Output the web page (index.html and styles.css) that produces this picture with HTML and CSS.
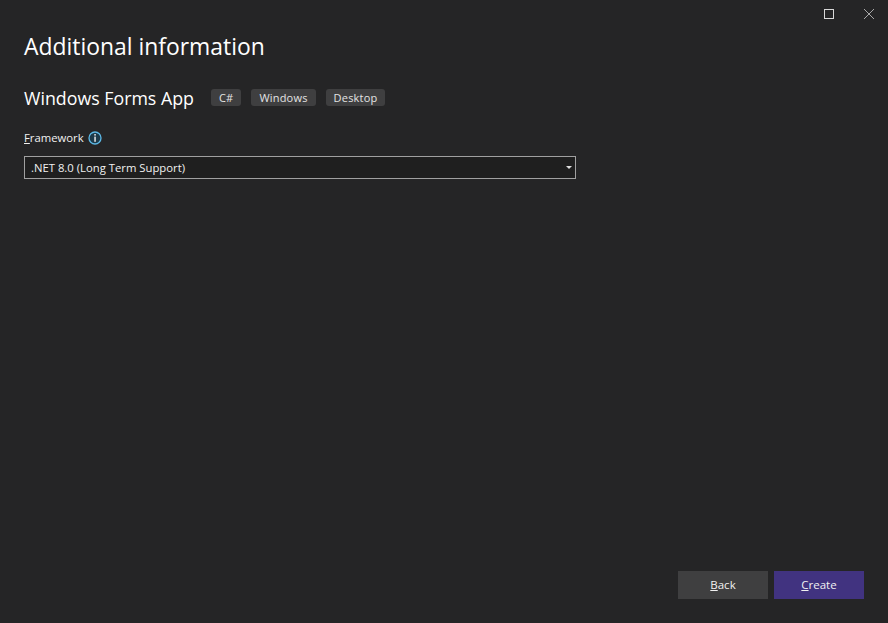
FILE: index.html
```html
<!DOCTYPE html>
<html lang="en">

<head>
    <meta charset="UTF-8">
    <title>Additional information</title>
    <link rel="stylesheet" href="styles.css">
</head>

<body>
    <div id="dialog">
        <div class="titlebar">
            <button class="winbtn" aria-label="Maximize">
                <svg width="10" height="10" viewBox="0 0 10 10"><rect x="0.5" y="0.5" width="9" height="9" fill="none" stroke="#d8d8d8"/></svg>
            </button>
            <button class="winbtn" aria-label="Close">
                <svg width="10" height="10" viewBox="0 0 10 10"><path d="M0 0L10 10M10 0L0 10" fill="none" stroke="#a8a8a8" stroke-width="1"/></svg>
            </button>
        </div>

        <div class="content">
            <h1>Additional information</h1>

            <div class="template">
                <h2>Windows Forms App</h2>
                <ul class="tags">
                    <li>C#</li>
                    <li>Windows</li>
                    <li>Desktop</li>
                </ul>
            </div>

            <div class="field-label">
                <label for="framework"><u>F</u>ramework</label>
                <svg class="info" width="14" height="14" viewBox="0 0 14 14">
                    <circle cx="7" cy="7" r="6" fill="#1d3a4a" stroke="#5cb8e6" stroke-width="1.3"/>
                    <rect x="6.3" y="3" width="1.5" height="1.6" fill="#e8e8e8"/>
                    <rect x="6.3" y="5.6" width="1.5" height="5.2" fill="#e8e8e8"/>
                </svg>
            </div>

            <div class="select" id="framework">
                <span>.NET 8.0 (Long Term Support)</span>
                <svg class="caret" width="6" height="3" viewBox="0 0 6 3"><path d="M0 0H6L3 3Z" fill="#e0e0e0"/></svg>
            </div>
        </div>

        <div class="actions">
            <button class="btn"><u>B</u>ack</button>
            <button class="btn primary"><u>C</u>reate</button>
        </div>
    </div>
</body>

</html>
```

FILE: styles.css
```css
html {
    font-family: 'Open Sans', 'Noto Sans', Arial, sans-serif;
    font-size: 12px;
}

body {
    margin: 0;
    background: #252526;
    color: #f1f1f1;
}

#dialog {
    display: flex;
    flex-direction: column;
    width: 888px;
    height: 623px;
}

.titlebar {
    display: flex;
    justify-content: flex-end;
    gap: 2px;
    height: 28px;
}

.winbtn {
    display: flex;
    align-items: center;
    justify-content: center;
    width: 38px;
    height: 28px;
    padding: 0;
    border: 0;
    background: none;
}

.content {
    flex: 1;
    padding: 2px 24px 0;
}

h1 {
    margin: 0;
    font-size: 22.9px;
    line-height: 34px;
    font-weight: 400;
    color: #fff;
}

.template {
    display: flex;
    align-items: flex-start;
    margin-top: 19px;
}

h2 {
    margin: 0;
    font-size: 17.8px;
    line-height: 30px;
    font-weight: 400;
    color: #fff;
}

.tags {
    display: flex;
    gap: 10px;
    margin: 6px 0 0 17px;
    padding: 0;
    list-style: none;
}

.tags li {
    height: 17px;
    padding: 0 8px;
    line-height: 17px;
    font-size: 11px;
    letter-spacing: 0.2px;
    color: #e4e4e4;
    background: #3f3f40;
    border-radius: 3px;
}

.field-label {
    display: flex;
    align-items: center;
    gap: 4px;
    margin-top: 16px;
    line-height: 18px;
    font-size: 11.3px;
}

.select {
    display: flex;
    align-items: center;
    justify-content: space-between;
    box-sizing: border-box;
    width: 552px;
    height: 23px;
    margin-top: 9px;
    padding: 0 3px 0 6px;
    font-size: 11.3px;
    background: #1f1f1f;
    border: 1px solid #a0a0a0;
}

.actions {
    display: flex;
    justify-content: flex-end;
    gap: 6px;
    padding: 0 24px 24px 0;
}

.btn {
    width: 90px;
    height: 28px;
    padding: 0 0 2px;
    border: 0;
    font-family: inherit;
    font-size: 11.5px;
    color: #f1f1f1;
    background: #3f3f40;
}

.btn.primary {
    background: #413380;
}
```
